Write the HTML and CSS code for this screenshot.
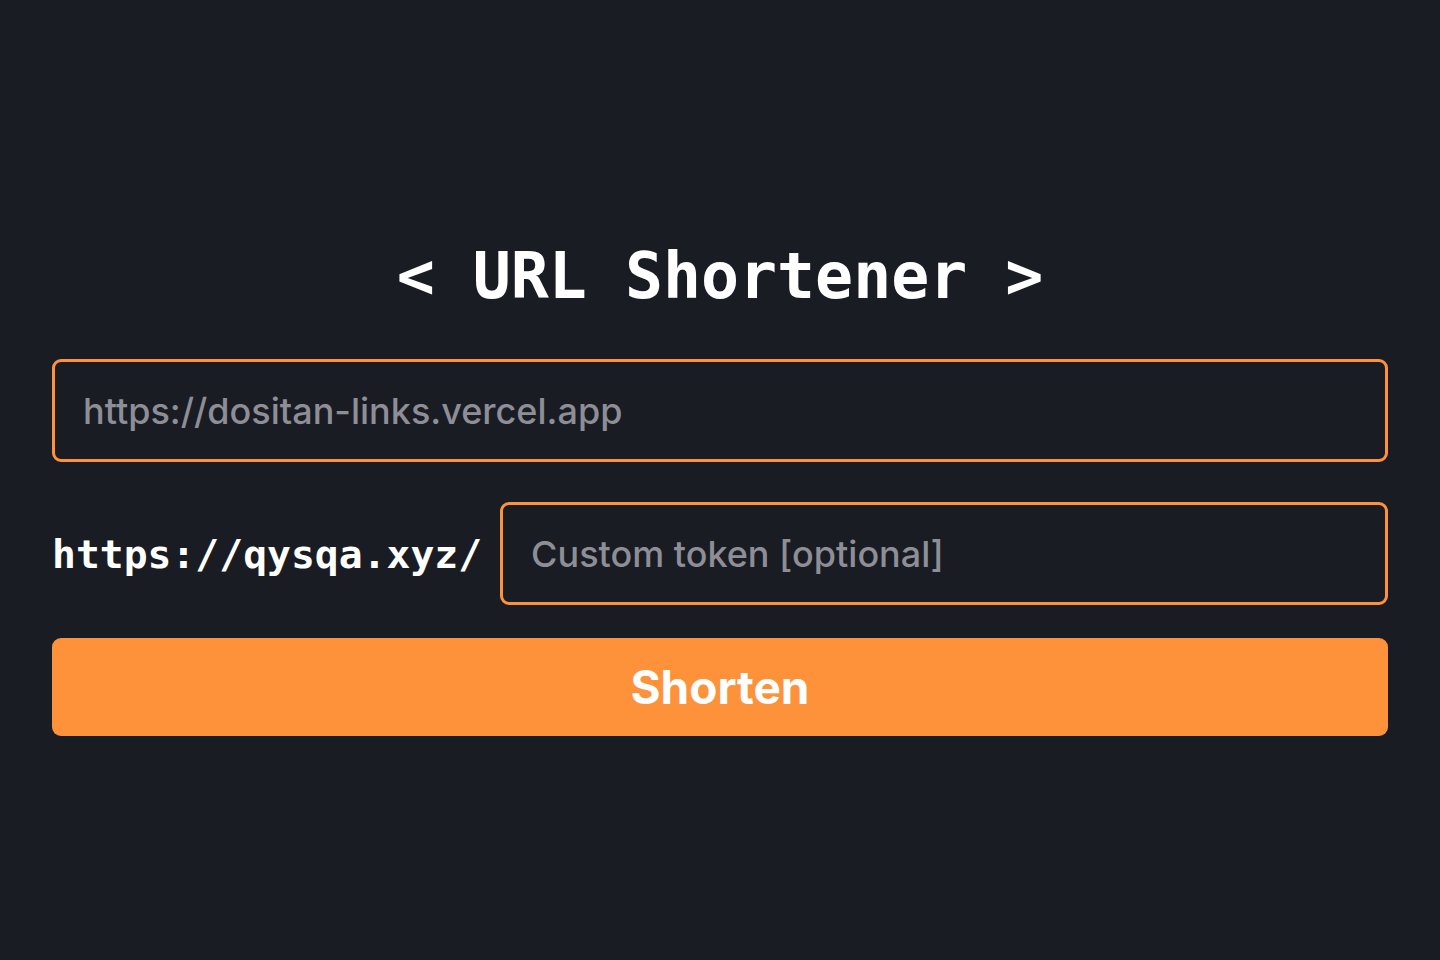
FILE: index.html
```html
<!DOCTYPE html>
<html lang="en">
<head>
<meta charset="utf-8">
<title>URL Shortener</title>
<link rel="stylesheet" href="styles.css">
</head>
<body>
<main class="page">
  <h1 class="title">&lt; URL Shortener &gt;</h1>
  <form class="form">
    <input class="field field-url" type="text" placeholder="https://dositan-links.vercel.app">
    <div class="token-row">
      <span class="prefix">https://qysqa.xyz/</span>
      <input class="field field-token" type="text" placeholder="Custom token [optional]">
    </div>
    <button class="submit" type="button">Shorten</button>
  </form>
</main>
</body>
</html>
```
FILE: styles.css
```css
* { box-sizing: border-box; }
html, body {
  margin: 0;
  padding: 0;
  background: #1a1c24;
  height: 100%;
}
body {
  font-family: Inter, "Noto Sans", sans-serif;
  color: #fff;
}
.page {
  padding: 236px 52px 0;
}
.title {
  margin: 0 0 43px;
  font-family: "DejaVu Sans Mono", "Liberation Mono", monospace;
  font-weight: bold;
  font-size: 63.2px;
  line-height: 80px;
  text-align: center;
  color: #fff;
}
.form {
  display: flex;
  flex-direction: column;
}
.field {
  height: 103px;
  border: 3px solid #fd923a;
  border-radius: 9px;
  background: #1a1c24;
  padding: 0 28px;
  font-family: Inter, "Noto Sans", sans-serif;
  font-size: 36px;
  font-weight: 500;
  color: #fff;
  outline: none;
}
.field::placeholder {
  color: #8e8e96;
}
.token-row {
  display: flex;
  align-items: center;
  gap: 18px;
  margin-top: 40px;
}
.prefix {
  font-family: "DejaVu Sans Mono", "Liberation Mono", monospace;
  font-weight: bold;
  font-size: 39.7px;
  white-space: nowrap;
  color: #fff;
}
.field-token {
  flex: 1;
  min-width: 0;
}
.submit {
  margin-top: 33px;
  height: 98px;
  border: none;
  border-radius: 9px;
  background: #fd923a;
  color: #fff;
  font-family: Inter, "Noto Sans", sans-serif;
  font-weight: bold;
  font-size: 46px;
  cursor: pointer;
}
```
